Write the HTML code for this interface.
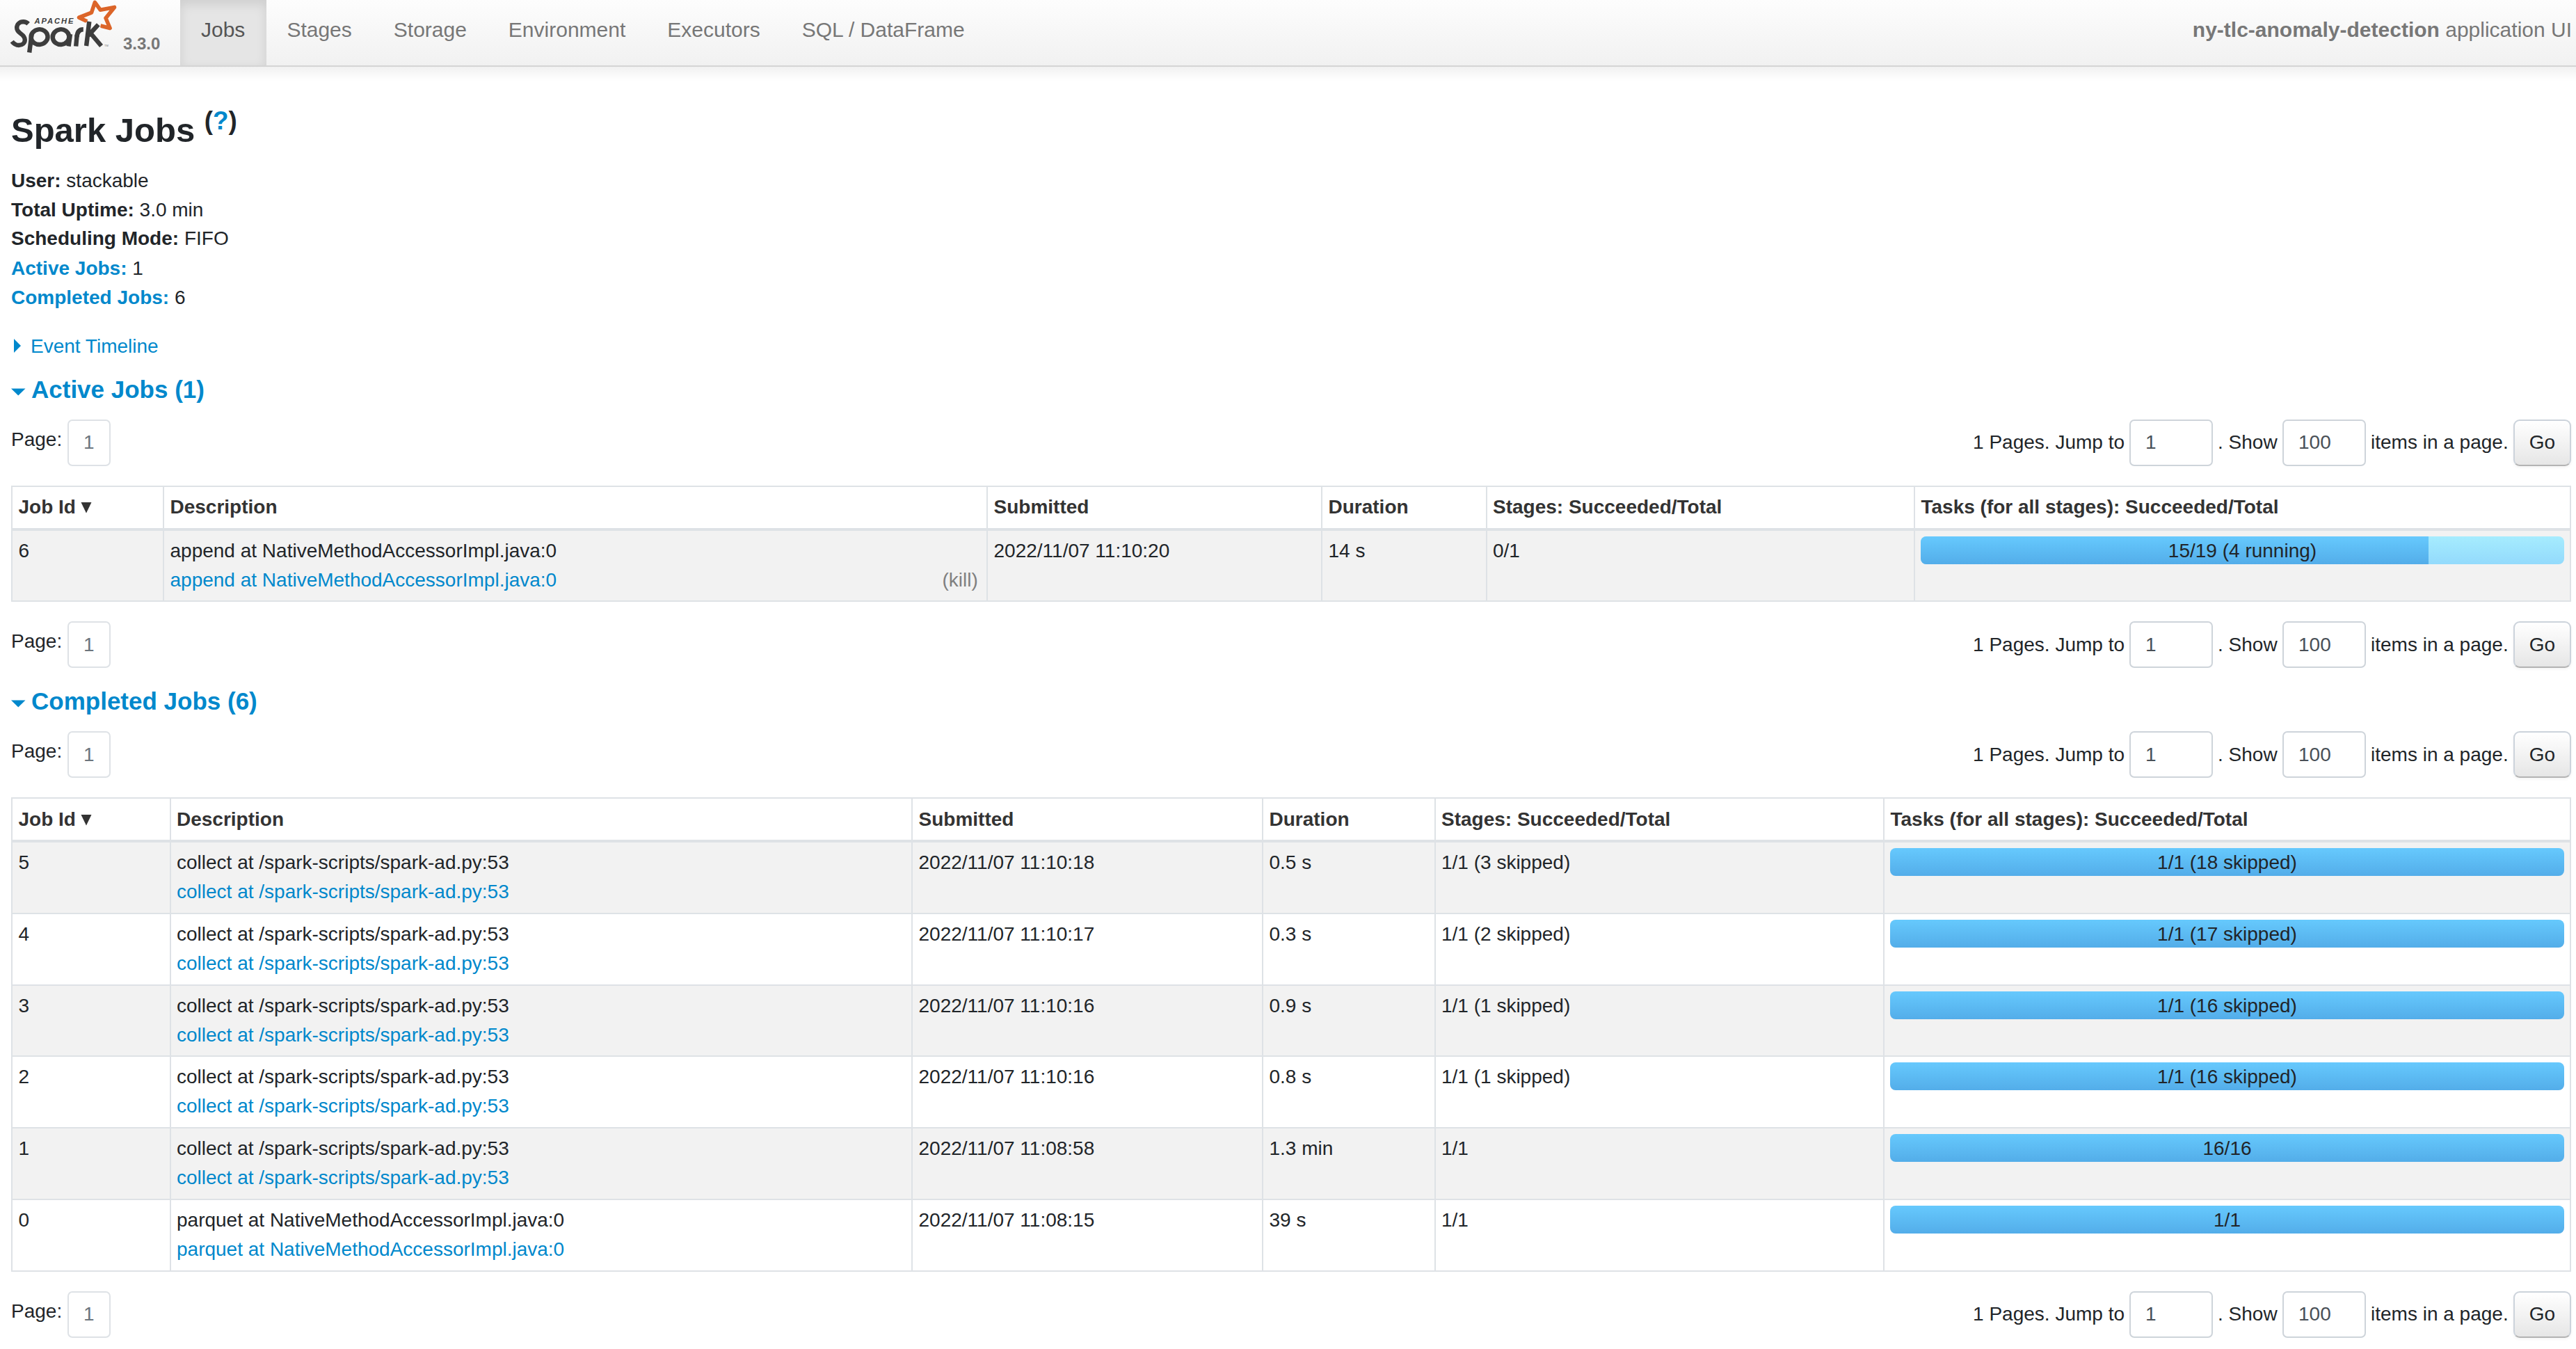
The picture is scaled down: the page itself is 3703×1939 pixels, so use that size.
<!DOCTYPE html>
<html><head><meta charset="utf-8"><title>Spark Jobs</title>
<style>
html,body{margin:0;padding:0;background:#fff;width:3703px;height:1939px;overflow:hidden;position:relative;font-family:"Liberation Sans", sans-serif;}
.t{position:absolute;white-space:nowrap;}
.r{position:absolute;box-sizing:border-box;}
</style></head><body>
<div class="r" style="left:0px;top:0px;width:3703px;height:94px;background:linear-gradient(to bottom,#fdfdfd,#f1f1f1);"></div>
<div class="r" style="left:0px;top:94px;width:3703px;height:2px;background:#d4d4d4;"></div>
<div class="r" style="left:0px;top:96px;width:3703px;height:22px;background:linear-gradient(to bottom,rgba(0,0,0,0.055),rgba(0,0,0,0.03) 40%,rgba(0,0,0,0.008) 75%,rgba(0,0,0,0));"></div>
<div class="r" style="left:259px;top:0px;width:124px;height:94px;background:#e5e5e5;box-shadow:inset 0 6px 16px rgba(0,0,0,0.10);"></div>
<svg class="r" style="left:0;top:0" width="180" height="94" viewBox="0 0 180 94">
<path d="M125.2 30.7 L113.6 25.2 L131.5 18.1 L136.4 3.4 L144.2 14.2 L164.5 10.4 L152.0 26.0 L158.1 40.5 L144.5 37.0" fill="none" stroke="#dc6529" stroke-width="5.6" stroke-linejoin="round" stroke-linecap="butt"/>
<g fill="none" stroke="#3d3d3d" stroke-width="6.4" stroke-linecap="butt">
<path d="M40.7 34.2 C38.5 32 36 31.3 33.5 31.3 C28 31.3 24.2 35 24.2 40 C24.2 43.5 26.5 46 30 48.5 C33.5 51 35.8 53.5 35.8 57.3 C35.8 61.8 32 65 27 65 C23 65 19.8 63 17.2 59.6"/>
<ellipse cx="56.6" cy="53.1" rx="12" ry="10.9" transform="rotate(-8 56.6 53.1)"/>
<path d="M45.6 49 L42.2 75.5"/>
<ellipse cx="87.5" cy="53.1" rx="11.8" ry="10.9" transform="rotate(-8 87.5 53.1)"/>
<path d="M101 49 L98.6 66.5"/>
<path d="M110.7 50 L109.2 66.5"/>
<path d="M110.6 53 C111 46 114 42.3 119.8 42.3"/>
</g>
<g fill="none" stroke="#fafafa" stroke-width="10" stroke-linecap="butt">
<path d="M128.3 32.5 L125.5 55"/>
<path d="M141 35.8 L130 48"/>
</g>
<g fill="none" stroke="#3d3d3d" stroke-width="6.4" stroke-linecap="butt">
<path d="M128.3 31 L124.1 66"/>
<path d="M141.3 35.3 L127 51"/>
<path d="M130.6 48.3 L145.6 66"/>
</g>
<text x="49.5" y="34" fill="#3d3d3d" font-family="Liberation Sans" font-weight="bold" font-style="italic" font-size="11.2" letter-spacing="1.9">APACHE</text>
<text x="150" y="66.5" fill="#777" font-family="Liberation Sans" font-size="4">TM</text>
</svg>
<div class="t" style="left:177px;top:51px;font-size:24px;line-height:24px;font-weight:bold;color:#777;">3.3.0</div>
<div class="t" style="left:259px;top:28px;font-size:30px;line-height:30px;color:#777;display:flex;"><span style="padding:0 30px;color:#555;">Jobs</span><span style="padding:0 30px;">Stages</span><span style="padding:0 30px;">Storage</span><span style="padding:0 30px;">Environment</span><span style="padding:0 30px;">Executors</span><span style="padding:0 30px;">SQL / DataFrame</span></div>
<div class="t" style="right:6px;top:28px;font-size:30px;line-height:30px;font-weight:normal;color:#777;"><b>ny-tlc-anomaly-detection</b> application UI</div>
<div class="t" style="left:16px;top:163px;font-size:49px;line-height:49px;font-weight:bold;color:#212529;">Spark Jobs <sup style="position:relative;font-size:75%;line-height:0;vertical-align:baseline;top:-0.5em;">(<a style="color:#0088cc;text-decoration:none">?</a>)</sup></div>
<div class="t" style="left:16px;top:246px;font-size:28px;line-height:28px;font-weight:normal;color:#212529;"><b style="color:#212529">User:</b> stackable</div>
<div class="t" style="left:16px;top:288px;font-size:28px;line-height:28px;font-weight:normal;color:#212529;"><b style="color:#212529">Total Uptime:</b> 3.0 min</div>
<div class="t" style="left:16px;top:329px;font-size:28px;line-height:28px;font-weight:normal;color:#212529;"><b style="color:#212529">Scheduling Mode:</b> FIFO</div>
<div class="t" style="left:16px;top:372px;font-size:28px;line-height:28px;font-weight:normal;color:#212529;"><b style="color:#0088cc">Active Jobs:</b> 1</div>
<div class="t" style="left:16px;top:414px;font-size:28px;line-height:28px;font-weight:normal;color:#212529;"><b style="color:#0088cc">Completed Jobs:</b> 6</div>
<svg class="r" style="left:19px;top:487px" width="12" height="21"><path d="M1 0 L11 10 L1 20 Z" fill="#0088cc"/></svg>
<div class="t" style="left:44px;top:484px;font-size:28px;line-height:28px;font-weight:normal;color:#0088cc;">Event Timeline</div>
<svg class="r" style="left:16px;top:558px" width="22" height="12"><path d="M0 0.5 L20.5 0.5 L10.25 10.5 Z" fill="#0088cc"/></svg>
<div class="t" style="left:45px;top:542px;font-size:35px;line-height:35px;font-weight:bold;color:#0088cc;">Active Jobs (1)</div>
<div class="t" style="left:16px;top:618px;font-size:28px;line-height:28px;font-weight:normal;color:#212529;">Page:</div>
<div class="r" style="left:97px;top:603px;width:62px;height:67px;border:2px solid #dee2e6;border-radius:7px;background:#fff;"></div>
<div class="t" style="left:120px;top:622px;font-size:28px;line-height:28px;font-weight:normal;color:#6c757d;">1</div>
<div class="r" style="left:3061px;top:603px;width:120px;height:67px;border:2px solid #ced4da;border-radius:7px;background:#fff;"></div>
<div class="r" style="left:3281px;top:603px;width:120px;height:67px;border:2px solid #ced4da;border-radius:7px;background:#fff;"></div>
<div class="r" style="left:3613px;top:603px;width:83px;height:67px;border:2px solid #ccd3db;border-bottom-color:#b3b3b3;border-radius:9px;background:linear-gradient(to bottom,#ffffff,#e6e6e6);box-shadow:0 2px 4px rgba(0,0,0,0.05);"></div>
<div class="t" style="right:649px;top:622px;font-size:28px;line-height:28px;font-weight:normal;color:#212529;">1 Pages. Jump to</div>
<div class="t" style="left:3084px;top:622px;font-size:28px;line-height:28px;font-weight:normal;color:#495057;">1</div>
<div class="t" style="left:3188px;top:622px;font-size:28px;line-height:28px;font-weight:normal;color:#212529;">. Show</div>
<div class="t" style="left:3304px;top:622px;font-size:28px;line-height:28px;font-weight:normal;color:#495057;">100</div>
<div class="t" style="left:3408px;top:622px;font-size:28px;line-height:28px;font-weight:normal;color:#212529;">items in a page.</div>
<div class="t" style="left:2654.5px;width:2000px;text-align:center;top:622px;font-size:28px;line-height:28px;font-weight:normal;color:#212529;">Go</div>
<div class="r" style="left:16px;top:763px;width:3680px;height:101.5px;background:#f2f2f2;"></div>
<div class="r" style="left:16px;top:698px;width:3680px;height:2px;background:#dee2e6;"></div>
<div class="r" style="left:16px;top:698px;width:2px;height:166.5px;background:#dee2e6;"></div>
<div class="r" style="left:3694px;top:698px;width:2px;height:166.5px;background:#dee2e6;"></div>
<div class="r" style="left:16px;top:759px;width:3680px;height:4px;background:#dee2e6;"></div>
<div class="r" style="left:16px;top:862.5px;width:3680px;height:2px;background:#dee2e6;"></div>
<div class="r" style="left:234px;top:698px;width:2px;height:166.5px;background:#dee2e6;"></div>
<div class="r" style="left:1418px;top:698px;width:2px;height:166.5px;background:#dee2e6;"></div>
<div class="r" style="left:1899px;top:698px;width:2px;height:166.5px;background:#dee2e6;"></div>
<div class="r" style="left:2135.5px;top:698px;width:2px;height:166.5px;background:#dee2e6;"></div>
<div class="r" style="left:2751px;top:698px;width:2px;height:166.5px;background:#dee2e6;"></div>
<div class="t" style="left:26.5px;top:715px;font-size:28px;line-height:28px;font-weight:bold;color:#333;">Job Id<svg style="position:absolute;left:89.5px;top:6px" width="16" height="17"><path d="M0.5 1 L15.5 1 L8 16.5 Z" fill="#333"/></svg></div>
<div class="t" style="left:244.5px;top:715px;font-size:28px;line-height:28px;font-weight:bold;color:#333;">Description</div>
<div class="t" style="left:1428.5px;top:715px;font-size:28px;line-height:28px;font-weight:bold;color:#333;">Submitted</div>
<div class="t" style="left:1909.5px;top:715px;font-size:28px;line-height:28px;font-weight:bold;color:#333;">Duration</div>
<div class="t" style="left:2146.0px;top:715px;font-size:28px;line-height:28px;font-weight:bold;color:#333;">Stages: Succeeded/Total</div>
<div class="t" style="left:2761.5px;top:715px;font-size:28px;line-height:28px;font-weight:bold;color:#333;">Tasks (for all stages): Succeeded/Total</div>
<div class="t" style="left:26.5px;top:778px;font-size:28px;line-height:28px;font-weight:normal;color:#212529;">6</div>
<div class="t" style="left:244.5px;top:778px;font-size:28px;line-height:28px;font-weight:normal;color:#212529;">append at NativeMethodAccessorImpl.java:0</div>
<div class="t" style="left:244.5px;top:820px;font-size:28px;line-height:28px;font-weight:normal;color:#0088cc;">append at NativeMethodAccessorImpl.java:0</div>
<div class="t" style="right:2297.3px;top:820px;font-size:28px;line-height:28px;font-weight:normal;color:#808080;">(kill)</div>
<div class="t" style="left:1428.5px;top:778px;font-size:28px;line-height:28px;font-weight:normal;color:#212529;">2022/11/07 11:10:20</div>
<div class="t" style="left:1909.5px;top:778px;font-size:28px;line-height:28px;font-weight:normal;color:#212529;">14 s</div>
<div class="t" style="left:2146.0px;top:778px;font-size:28px;line-height:28px;font-weight:normal;color:#212529;">0/1</div>
<div class="r" style="left:2761px;top:771px;width:925px;height:40px;background:#f2f2f2;border-radius:8px;overflow:hidden;"></div>
<div class="r" style="left:2761px;top:771px;width:925px;height:40px;border-radius:8px;background:linear-gradient(to bottom,#a6ecfe,#93dafc);"></div>
<div class="r" style="left:2761px;top:771px;width:730px;height:40px;border-radius:8px 0 0 8px;background:linear-gradient(to bottom,#66c9fd,#53ade9);"></div>
<div class="t" style="left:2223.5px;width:2000px;text-align:center;top:778px;font-size:28px;line-height:28px;font-weight:normal;color:#212529;">15/19 (4 running)</div>
<div class="t" style="left:16px;top:908px;font-size:28px;line-height:28px;font-weight:normal;color:#212529;">Page:</div>
<div class="r" style="left:97px;top:893px;width:62px;height:67px;border:2px solid #dee2e6;border-radius:7px;background:#fff;"></div>
<div class="t" style="left:120px;top:913px;font-size:28px;line-height:28px;font-weight:normal;color:#6c757d;">1</div>
<div class="r" style="left:3061px;top:893px;width:120px;height:67px;border:2px solid #ced4da;border-radius:7px;background:#fff;"></div>
<div class="r" style="left:3281px;top:893px;width:120px;height:67px;border:2px solid #ced4da;border-radius:7px;background:#fff;"></div>
<div class="r" style="left:3613px;top:893px;width:83px;height:67px;border:2px solid #ccd3db;border-bottom-color:#b3b3b3;border-radius:9px;background:linear-gradient(to bottom,#ffffff,#e6e6e6);box-shadow:0 2px 4px rgba(0,0,0,0.05);"></div>
<div class="t" style="right:649px;top:913px;font-size:28px;line-height:28px;font-weight:normal;color:#212529;">1 Pages. Jump to</div>
<div class="t" style="left:3084px;top:913px;font-size:28px;line-height:28px;font-weight:normal;color:#495057;">1</div>
<div class="t" style="left:3188px;top:913px;font-size:28px;line-height:28px;font-weight:normal;color:#212529;">. Show</div>
<div class="t" style="left:3304px;top:913px;font-size:28px;line-height:28px;font-weight:normal;color:#495057;">100</div>
<div class="t" style="left:3408px;top:913px;font-size:28px;line-height:28px;font-weight:normal;color:#212529;">items in a page.</div>
<div class="t" style="left:2654.5px;width:2000px;text-align:center;top:913px;font-size:28px;line-height:28px;font-weight:normal;color:#212529;">Go</div>
<svg class="r" style="left:16px;top:1006px" width="22" height="12"><path d="M0 0.5 L20.5 0.5 L10.25 10.5 Z" fill="#0088cc"/></svg>
<div class="t" style="left:45px;top:990px;font-size:35px;line-height:35px;font-weight:bold;color:#0088cc;">Completed Jobs (6)</div>
<div class="t" style="left:16px;top:1066px;font-size:28px;line-height:28px;font-weight:normal;color:#212529;">Page:</div>
<div class="r" style="left:97px;top:1051px;width:62px;height:67px;border:2px solid #dee2e6;border-radius:7px;background:#fff;"></div>
<div class="t" style="left:120px;top:1071px;font-size:28px;line-height:28px;font-weight:normal;color:#6c757d;">1</div>
<div class="r" style="left:3061px;top:1051px;width:120px;height:67px;border:2px solid #ced4da;border-radius:7px;background:#fff;"></div>
<div class="r" style="left:3281px;top:1051px;width:120px;height:67px;border:2px solid #ced4da;border-radius:7px;background:#fff;"></div>
<div class="r" style="left:3613px;top:1051px;width:83px;height:67px;border:2px solid #ccd3db;border-bottom-color:#b3b3b3;border-radius:9px;background:linear-gradient(to bottom,#ffffff,#e6e6e6);box-shadow:0 2px 4px rgba(0,0,0,0.05);"></div>
<div class="t" style="right:649px;top:1071px;font-size:28px;line-height:28px;font-weight:normal;color:#212529;">1 Pages. Jump to</div>
<div class="t" style="left:3084px;top:1071px;font-size:28px;line-height:28px;font-weight:normal;color:#495057;">1</div>
<div class="t" style="left:3188px;top:1071px;font-size:28px;line-height:28px;font-weight:normal;color:#212529;">. Show</div>
<div class="t" style="left:3304px;top:1071px;font-size:28px;line-height:28px;font-weight:normal;color:#495057;">100</div>
<div class="t" style="left:3408px;top:1071px;font-size:28px;line-height:28px;font-weight:normal;color:#212529;">items in a page.</div>
<div class="t" style="left:2654.5px;width:2000px;text-align:center;top:1071px;font-size:28px;line-height:28px;font-weight:normal;color:#212529;">Go</div>
<div class="r" style="left:16px;top:1211px;width:3680px;height:102.8px;background:#f2f2f2;"></div>
<div class="r" style="left:16px;top:1416.6px;width:3680px;height:102.8px;background:#f2f2f2;"></div>
<div class="r" style="left:16px;top:1622.2px;width:3680px;height:102.8px;background:#f2f2f2;"></div>
<div class="r" style="left:16px;top:1146px;width:3680px;height:2px;background:#dee2e6;"></div>
<div class="r" style="left:16px;top:1146px;width:2px;height:681.8px;background:#dee2e6;"></div>
<div class="r" style="left:3694px;top:1146px;width:2px;height:681.8px;background:#dee2e6;"></div>
<div class="r" style="left:16px;top:1207px;width:3680px;height:4px;background:#dee2e6;"></div>
<div class="r" style="left:16px;top:1311.8px;width:3680px;height:2px;background:#dee2e6;"></div>
<div class="r" style="left:16px;top:1414.6px;width:3680px;height:2px;background:#dee2e6;"></div>
<div class="r" style="left:16px;top:1517.4px;width:3680px;height:2px;background:#dee2e6;"></div>
<div class="r" style="left:16px;top:1620.2px;width:3680px;height:2px;background:#dee2e6;"></div>
<div class="r" style="left:16px;top:1723px;width:3680px;height:2px;background:#dee2e6;"></div>
<div class="r" style="left:16px;top:1825.8px;width:3680px;height:2px;background:#dee2e6;"></div>
<div class="r" style="left:243.5px;top:1146px;width:2px;height:681.8px;background:#dee2e6;"></div>
<div class="r" style="left:1310px;top:1146px;width:2px;height:681.8px;background:#dee2e6;"></div>
<div class="r" style="left:1814px;top:1146px;width:2px;height:681.8px;background:#dee2e6;"></div>
<div class="r" style="left:2061.5px;top:1146px;width:2px;height:681.8px;background:#dee2e6;"></div>
<div class="r" style="left:2707px;top:1146px;width:2px;height:681.8px;background:#dee2e6;"></div>
<div class="t" style="left:26.5px;top:1164px;font-size:28px;line-height:28px;font-weight:bold;color:#333;">Job Id<svg style="position:absolute;left:89.5px;top:6px" width="16" height="17"><path d="M0.5 1 L15.5 1 L8 16.5 Z" fill="#333"/></svg></div>
<div class="t" style="left:254.0px;top:1164px;font-size:28px;line-height:28px;font-weight:bold;color:#333;">Description</div>
<div class="t" style="left:1320.5px;top:1164px;font-size:28px;line-height:28px;font-weight:bold;color:#333;">Submitted</div>
<div class="t" style="left:1824.5px;top:1164px;font-size:28px;line-height:28px;font-weight:bold;color:#333;">Duration</div>
<div class="t" style="left:2072.0px;top:1164px;font-size:28px;line-height:28px;font-weight:bold;color:#333;">Stages: Succeeded/Total</div>
<div class="t" style="left:2717.5px;top:1164px;font-size:28px;line-height:28px;font-weight:bold;color:#333;">Tasks (for all stages): Succeeded/Total</div>
<div class="t" style="left:26.5px;top:1226px;font-size:28px;line-height:28px;font-weight:normal;color:#212529;">5</div>
<div class="t" style="left:254.0px;top:1226px;font-size:28px;line-height:28px;font-weight:normal;color:#212529;">collect at /spark-scripts/spark-ad.py:53</div>
<div class="t" style="left:254.0px;top:1268px;font-size:28px;line-height:28px;font-weight:normal;color:#0088cc;">collect at /spark-scripts/spark-ad.py:53</div>
<div class="t" style="left:1320.5px;top:1226px;font-size:28px;line-height:28px;font-weight:normal;color:#212529;">2022/11/07 11:10:18</div>
<div class="t" style="left:1824.5px;top:1226px;font-size:28px;line-height:28px;font-weight:normal;color:#212529;">0.5 s</div>
<div class="t" style="left:2072.0px;top:1226px;font-size:28px;line-height:28px;font-weight:normal;color:#212529;">1/1 (3 skipped)</div>
<div class="r" style="left:2717px;top:1219px;width:969px;height:40px;background:#f2f2f2;border-radius:8px;overflow:hidden;"></div>
<div class="r" style="left:2717px;top:1219px;width:969px;height:40px;border-radius:8px 8px 8px 8px;background:linear-gradient(to bottom,#66c9fd,#53ade9);"></div>
<div class="t" style="left:2201.5px;width:2000px;text-align:center;top:1226px;font-size:28px;line-height:28px;font-weight:normal;color:#212529;">1/1 (18 skipped)</div>
<div class="t" style="left:26.5px;top:1328.8px;font-size:28px;line-height:28px;font-weight:normal;color:#212529;">4</div>
<div class="t" style="left:254.0px;top:1328.8px;font-size:28px;line-height:28px;font-weight:normal;color:#212529;">collect at /spark-scripts/spark-ad.py:53</div>
<div class="t" style="left:254.0px;top:1370.8px;font-size:28px;line-height:28px;font-weight:normal;color:#0088cc;">collect at /spark-scripts/spark-ad.py:53</div>
<div class="t" style="left:1320.5px;top:1328.8px;font-size:28px;line-height:28px;font-weight:normal;color:#212529;">2022/11/07 11:10:17</div>
<div class="t" style="left:1824.5px;top:1328.8px;font-size:28px;line-height:28px;font-weight:normal;color:#212529;">0.3 s</div>
<div class="t" style="left:2072.0px;top:1328.8px;font-size:28px;line-height:28px;font-weight:normal;color:#212529;">1/1 (2 skipped)</div>
<div class="r" style="left:2717px;top:1321.8px;width:969px;height:40px;background:#f2f2f2;border-radius:8px;overflow:hidden;"></div>
<div class="r" style="left:2717px;top:1321.8px;width:969px;height:40px;border-radius:8px 8px 8px 8px;background:linear-gradient(to bottom,#66c9fd,#53ade9);"></div>
<div class="t" style="left:2201.5px;width:2000px;text-align:center;top:1328.8px;font-size:28px;line-height:28px;font-weight:normal;color:#212529;">1/1 (17 skipped)</div>
<div class="t" style="left:26.5px;top:1431.6px;font-size:28px;line-height:28px;font-weight:normal;color:#212529;">3</div>
<div class="t" style="left:254.0px;top:1431.6px;font-size:28px;line-height:28px;font-weight:normal;color:#212529;">collect at /spark-scripts/spark-ad.py:53</div>
<div class="t" style="left:254.0px;top:1473.6px;font-size:28px;line-height:28px;font-weight:normal;color:#0088cc;">collect at /spark-scripts/spark-ad.py:53</div>
<div class="t" style="left:1320.5px;top:1431.6px;font-size:28px;line-height:28px;font-weight:normal;color:#212529;">2022/11/07 11:10:16</div>
<div class="t" style="left:1824.5px;top:1431.6px;font-size:28px;line-height:28px;font-weight:normal;color:#212529;">0.9 s</div>
<div class="t" style="left:2072.0px;top:1431.6px;font-size:28px;line-height:28px;font-weight:normal;color:#212529;">1/1 (1 skipped)</div>
<div class="r" style="left:2717px;top:1424.6px;width:969px;height:40px;background:#f2f2f2;border-radius:8px;overflow:hidden;"></div>
<div class="r" style="left:2717px;top:1424.6px;width:969px;height:40px;border-radius:8px 8px 8px 8px;background:linear-gradient(to bottom,#66c9fd,#53ade9);"></div>
<div class="t" style="left:2201.5px;width:2000px;text-align:center;top:1431.6px;font-size:28px;line-height:28px;font-weight:normal;color:#212529;">1/1 (16 skipped)</div>
<div class="t" style="left:26.5px;top:1534.3999999999999px;font-size:28px;line-height:28px;font-weight:normal;color:#212529;">2</div>
<div class="t" style="left:254.0px;top:1534.3999999999999px;font-size:28px;line-height:28px;font-weight:normal;color:#212529;">collect at /spark-scripts/spark-ad.py:53</div>
<div class="t" style="left:254.0px;top:1576.3999999999999px;font-size:28px;line-height:28px;font-weight:normal;color:#0088cc;">collect at /spark-scripts/spark-ad.py:53</div>
<div class="t" style="left:1320.5px;top:1534.3999999999999px;font-size:28px;line-height:28px;font-weight:normal;color:#212529;">2022/11/07 11:10:16</div>
<div class="t" style="left:1824.5px;top:1534.3999999999999px;font-size:28px;line-height:28px;font-weight:normal;color:#212529;">0.8 s</div>
<div class="t" style="left:2072.0px;top:1534.3999999999999px;font-size:28px;line-height:28px;font-weight:normal;color:#212529;">1/1 (1 skipped)</div>
<div class="r" style="left:2717px;top:1527.4px;width:969px;height:40px;background:#f2f2f2;border-radius:8px;overflow:hidden;"></div>
<div class="r" style="left:2717px;top:1527.4px;width:969px;height:40px;border-radius:8px 8px 8px 8px;background:linear-gradient(to bottom,#66c9fd,#53ade9);"></div>
<div class="t" style="left:2201.5px;width:2000px;text-align:center;top:1534.3999999999999px;font-size:28px;line-height:28px;font-weight:normal;color:#212529;">1/1 (16 skipped)</div>
<div class="t" style="left:26.5px;top:1637.1999999999998px;font-size:28px;line-height:28px;font-weight:normal;color:#212529;">1</div>
<div class="t" style="left:254.0px;top:1637.1999999999998px;font-size:28px;line-height:28px;font-weight:normal;color:#212529;">collect at /spark-scripts/spark-ad.py:53</div>
<div class="t" style="left:254.0px;top:1679.1999999999998px;font-size:28px;line-height:28px;font-weight:normal;color:#0088cc;">collect at /spark-scripts/spark-ad.py:53</div>
<div class="t" style="left:1320.5px;top:1637.1999999999998px;font-size:28px;line-height:28px;font-weight:normal;color:#212529;">2022/11/07 11:08:58</div>
<div class="t" style="left:1824.5px;top:1637.1999999999998px;font-size:28px;line-height:28px;font-weight:normal;color:#212529;">1.3 min</div>
<div class="t" style="left:2072.0px;top:1637.1999999999998px;font-size:28px;line-height:28px;font-weight:normal;color:#212529;">1/1</div>
<div class="r" style="left:2717px;top:1630.2px;width:969px;height:40px;background:#f2f2f2;border-radius:8px;overflow:hidden;"></div>
<div class="r" style="left:2717px;top:1630.2px;width:969px;height:40px;border-radius:8px 8px 8px 8px;background:linear-gradient(to bottom,#66c9fd,#53ade9);"></div>
<div class="t" style="left:2201.5px;width:2000px;text-align:center;top:1637.1999999999998px;font-size:28px;line-height:28px;font-weight:normal;color:#212529;">16/16</div>
<div class="t" style="left:26.5px;top:1739.9999999999998px;font-size:28px;line-height:28px;font-weight:normal;color:#212529;">0</div>
<div class="t" style="left:254.0px;top:1739.9999999999998px;font-size:28px;line-height:28px;font-weight:normal;color:#212529;">parquet at NativeMethodAccessorImpl.java:0</div>
<div class="t" style="left:254.0px;top:1781.9999999999998px;font-size:28px;line-height:28px;font-weight:normal;color:#0088cc;">parquet at NativeMethodAccessorImpl.java:0</div>
<div class="t" style="left:1320.5px;top:1739.9999999999998px;font-size:28px;line-height:28px;font-weight:normal;color:#212529;">2022/11/07 11:08:15</div>
<div class="t" style="left:1824.5px;top:1739.9999999999998px;font-size:28px;line-height:28px;font-weight:normal;color:#212529;">39 s</div>
<div class="t" style="left:2072.0px;top:1739.9999999999998px;font-size:28px;line-height:28px;font-weight:normal;color:#212529;">1/1</div>
<div class="r" style="left:2717px;top:1733px;width:969px;height:40px;background:#f2f2f2;border-radius:8px;overflow:hidden;"></div>
<div class="r" style="left:2717px;top:1733px;width:969px;height:40px;border-radius:8px 8px 8px 8px;background:linear-gradient(to bottom,#66c9fd,#53ade9);"></div>
<div class="t" style="left:2201.5px;width:2000px;text-align:center;top:1739.9999999999998px;font-size:28px;line-height:28px;font-weight:normal;color:#212529;">1/1</div>
<div class="t" style="left:16px;top:1871px;font-size:28px;line-height:28px;font-weight:normal;color:#212529;">Page:</div>
<div class="r" style="left:97px;top:1856px;width:62px;height:67px;border:2px solid #dee2e6;border-radius:7px;background:#fff;"></div>
<div class="t" style="left:120px;top:1875px;font-size:28px;line-height:28px;font-weight:normal;color:#6c757d;">1</div>
<div class="r" style="left:3061px;top:1856px;width:120px;height:67px;border:2px solid #ced4da;border-radius:7px;background:#fff;"></div>
<div class="r" style="left:3281px;top:1856px;width:120px;height:67px;border:2px solid #ced4da;border-radius:7px;background:#fff;"></div>
<div class="r" style="left:3613px;top:1856px;width:83px;height:67px;border:2px solid #ccd3db;border-bottom-color:#b3b3b3;border-radius:9px;background:linear-gradient(to bottom,#ffffff,#e6e6e6);box-shadow:0 2px 4px rgba(0,0,0,0.05);"></div>
<div class="t" style="right:649px;top:1875px;font-size:28px;line-height:28px;font-weight:normal;color:#212529;">1 Pages. Jump to</div>
<div class="t" style="left:3084px;top:1875px;font-size:28px;line-height:28px;font-weight:normal;color:#495057;">1</div>
<div class="t" style="left:3188px;top:1875px;font-size:28px;line-height:28px;font-weight:normal;color:#212529;">. Show</div>
<div class="t" style="left:3304px;top:1875px;font-size:28px;line-height:28px;font-weight:normal;color:#495057;">100</div>
<div class="t" style="left:3408px;top:1875px;font-size:28px;line-height:28px;font-weight:normal;color:#212529;">items in a page.</div>
<div class="t" style="left:2654.5px;width:2000px;text-align:center;top:1875px;font-size:28px;line-height:28px;font-weight:normal;color:#212529;">Go</div>
</body></html>
